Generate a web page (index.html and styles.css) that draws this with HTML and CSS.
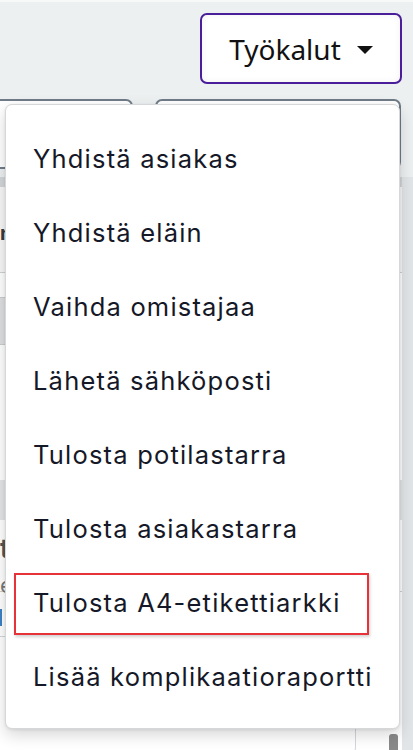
FILE: index.html
```html
<!DOCTYPE html>
<html lang="fi">
<head>
<meta charset="utf-8">
<title>Työkalut</title>
<link rel="stylesheet" href="styles.css">
</head>
<body>
<div class="page">
  <header class="header">
    <button class="tools-btn" type="button">Työkalut<span class="caret"></span></button>
  </header>
  <div class="fields">
    <div class="field field-a"></div>
    <div class="field field-b"></div>
  </div>
  <div class="workspace">
    <div class="panel">
      <div class="band"></div>
      <div class="sec sec-1"><span class="peek peek-dark">n</span></div>
      <div class="sec sec-2"><div class="chip"></div></div>
      <div class="band band-2"></div>
      <div class="sec sec-3"><span class="peek peek-bold">t</span><span class="peek peek-grey">e</span></div>
      <div class="sec sec-4"><span class="link-bar"></span></div>
      <div class="card"></div>
      <div class="thumb"></div>
    </div>
    <div class="gutter"></div>
  </div>

  <div class="menu">
    <div class="item">Yhdistä asiakas</div>
    <div class="item">Yhdistä eläin</div>
    <div class="item">Vaihda omistajaa</div>
    <div class="item">Lähetä sähköposti</div>
    <div class="item">Tulosta potilastarra</div>
    <div class="item">Tulosta asiakastarra</div>
    <div class="item item-marked">Tulosta A4-etikettiarkki</div>
    <div class="item">Lisää komplikaatioraportti</div>
  </div>
</div>
</body>
</html>
```

FILE: styles.css
```css
html, body {
  margin: 0;
  padding: 0;
}

body {
  background: #edf0f1;
  font-family: "Inter", "Noto Sans", sans-serif;
  overflow: hidden;
}

.page {
  position: relative;
  width: 413px;
  height: 750px;
  overflow: hidden;
  border-top: 2px solid #f7f8f8;
  box-sizing: border-box;
}

.header {
  display: flex;
  justify-content: flex-end;
  padding: 11px 11px 0 0;
}

.tools-btn {
  width: 202px;
  height: 71px;
  box-sizing: border-box;
  border: 2px solid #4a1d9b;
  border-radius: 7px;
  background: #fff;
  box-shadow: inset 0 0 6px rgba(0, 0, 0, 0.06);
  display: flex;
  align-items: center;
  justify-content: center;
  gap: 16px;
  padding: 0;
  font-family: "Noto Sans", "Open Sans", sans-serif;
  font-size: 28px;
  color: #111;
}

.caret {
  width: 0;
  height: 0;
  border-left: 8px solid transparent;
  border-right: 8px solid transparent;
  border-top: 8px solid #111;
  margin-top: 2px;
}

.fields {
  display: flex;
  gap: 22px;
  margin-top: 15px;
  margin-left: -12px;
  width: 425px;
}

.field {
  height: 70px;
  box-sizing: border-box;
  border: 2px solid #6f7c88;
  border-radius: 7px;
  background: #fff;
}

.field-a { width: 145px; }
.field-b { width: 246px; }

.workspace {
  display: flex;
  margin-top: 8px;
}

.panel {
  position: relative;
  flex: 0 0 402px;
  height: 580px;
  background: #fff;
}

.gutter {
  flex: 1;
  background: #e2e5e7;
}

.band {
  height: 10px;
  background: #d3d6d8;
}

.sec {
  position: relative;
}

.sec-1 {
  height: 85px;
  background: #f7f7f7;
  border-bottom: 1px solid #cfd1d3;
}

.peek {
  position: absolute;
  left: 0;
  font-weight: 700;
  font-size: 20px;
  line-height: 20px;
  white-space: nowrap;
}

.peek-dark {
  top: 36px;
  color: #3a3a3a;
}

.sec-2 {
  height: 207px;
}

.chip {
  position: absolute;
  left: -10px;
  top: 24px;
  width: 20px;
  height: 46px;
  border-radius: 6px;
  background: #dddfe0;
  border: 1px solid #c9cbcd;
}

.band-2 {
  height: 40px;
  background: #e3e5e6;
}

.sec-3 {
  height: 71px;
  border-bottom: 1px solid #cfd1d3;
}

.peek-bold {
  top: 16px;
  color: #555;
  font-size: 26px;
  line-height: 26px;
}

.peek-grey {
  top: 55px;
  color: #777;
  font-weight: 400;
  font-size: 22px;
}

.sec-4 {
  height: 40px;
}

.link-bar {
  position: absolute;
  left: 0;
  top: 17px;
  width: 2px;
  height: 17px;
  background: #3b82c4;
}

.card {
  position: absolute;
  left: -10px;
  bottom: 1px;
  width: 366px;
  height: 120px;
  box-sizing: border-box;
  border: 1px solid #d4d6d8;
  border-radius: 0 0 8px 0;
}

.thumb {
  position: absolute;
  left: 389px;
  bottom: 2px;
  width: 9px;
  height: 21px;
  border-radius: 3px;
  background: #8a8a8a;
}

.menu {
  position: absolute;
  left: 5px;
  top: 102px;
  width: 395px;
  box-sizing: border-box;
  background: #fff;
  border: 1px solid #d5d7d9;
  border-radius: 7px;
  padding: 16px 0 15px;
  box-shadow: 0 6px 16px rgba(0, 0, 0, 0.16), 0 1px 3px rgba(0, 0, 0, 0.08);
}

.item {
  position: relative;
  height: 74px;
  display: flex;
  align-items: center;
  padding-left: 27px;
  font-size: 25.5px;
  letter-spacing: 1.2px;
  color: #151827;
  white-space: nowrap;
}

.item-marked::after {
  content: "";
  position: absolute;
  left: 8px;
  top: 8px;
  width: 355px;
  height: 62px;
  box-sizing: border-box;
  border: 2px solid #e8323a;
  box-shadow: 1px 2px 3px rgba(0, 0, 0, 0.18);
}
```
